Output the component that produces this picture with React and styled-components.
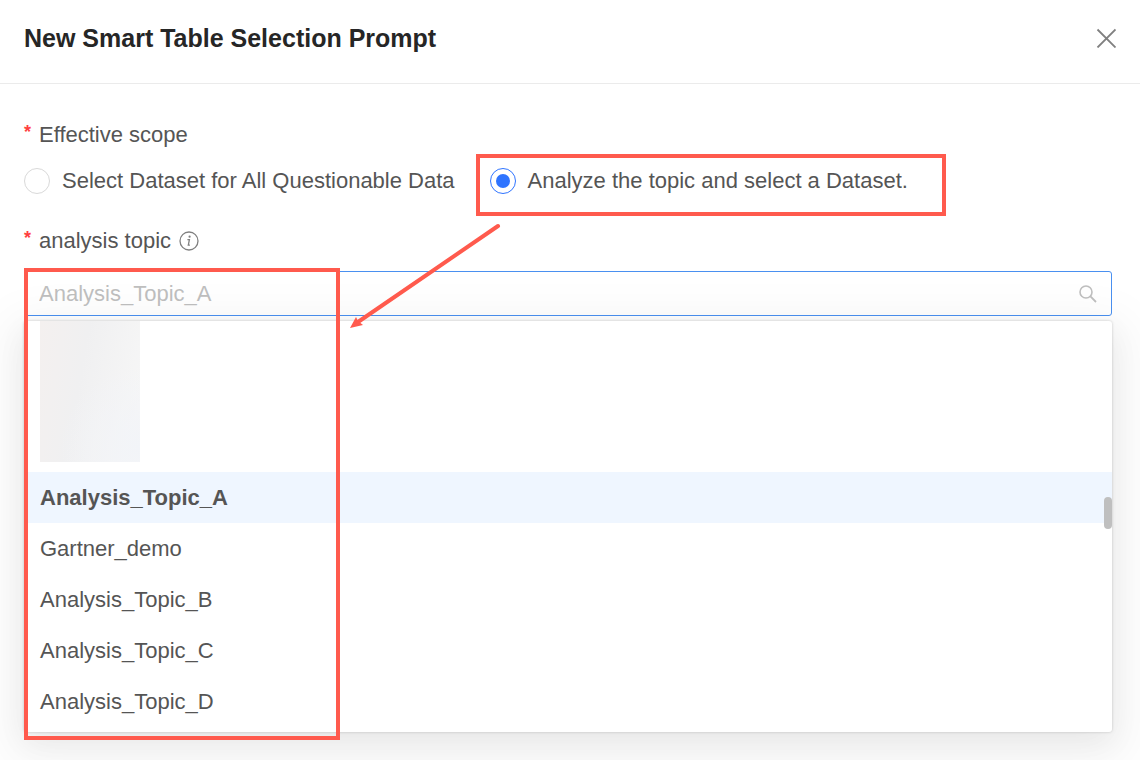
import React from "react";
import styled, { createGlobalStyle } from "styled-components";

const GlobalStyle = createGlobalStyle`
  * {
    box-sizing: border-box;
  }

  body {
    margin: 0;
    background: #ffffff;
    color: #555555;
    font-family: "Liberation Sans", Arial, sans-serif;
    font-size: 22px;
    line-height: 34px;
    overflow: hidden;
  }
`;

const Dialog = styled.section`
  position: relative;
  min-height: 100vh;
`;

const Header = styled.header`
  display: flex;
  align-items: center;
  justify-content: space-between;
  padding: 20px 24px 27px;
  border-bottom: 1px solid #ebebeb;
`;

const Title = styled.h1`
  margin: 0;
  color: #262626;
  font-size: 25px;
  font-weight: 700;
  line-height: 36px;
`;

const CloseButton = styled.button`
  display: flex;
  padding: 0;
  border: none;
  background: none;
  color: #808080;
  cursor: pointer;
`;

const Form = styled.form`
  display: flex;
  flex-direction: column;
  padding: 34px 28px 28px 24px;
`;

const Field = styled.fieldset`
  min-width: 0;
  margin: 0 0 26px;
  padding: 0;
  border: none;
`;

const LabelRow = styled.div`
  display: flex;
  align-items: center;
  gap: 8px;
`;

const Required = styled.span`
  align-self: flex-start;
  width: 7px;
  color: #ff4040;
  font-size: 18px;
  font-weight: 700;
  line-height: 28px;
`;

const RadioGroup = styled.div`
  display: flex;
  align-items: center;
  gap: 35px;
  margin-top: 12px;
`;

const RadioLabel = styled.label`
  position: relative;
  display: flex;
  align-items: center;
  gap: 12px;
  white-space: nowrap;
  cursor: pointer;
`;

const Radio = styled.input`
  appearance: none;
  display: grid;
  place-items: center;
  width: 26px;
  height: 26px;
  margin: 0;
  border: 1px solid #d9d9d9;
  border-radius: 50%;
  background: #ffffff;

  &:checked {
    border-color: #2f74ff;
  }

  &:checked::before {
    content: "";
    width: 14px;
    height: 14px;
    border-radius: 50%;
    background: #2f74ff;
  }
`;

const Picker = styled.div`
  position: relative;
  margin-top: 13px;
`;

const SearchBox = styled.div`
  display: flex;
  align-items: center;
  height: 45px;
  padding: 0 14px;
  border: 1px solid #4a90f0;
  border-radius: 3px;
  color: #bfbfbf;
`;

const SearchInput = styled.input`
  flex: 1;
  min-width: 0;
  padding: 0;
  border: none;
  outline: none;
  background: none;
  color: #555555;
  font: inherit;

  &::placeholder {
    color: #bfbfbf;
    opacity: 1;
  }
`;

const Dropdown = styled.div`
  position: relative;
  margin-top: 5px;
  padding-bottom: 5px;
  border-radius: 3px;
  background: #ffffff;
  box-shadow:
    0 0 3px rgba(0, 0, 0, 0.2),
    0 10px 30px rgba(0, 0, 0, 0.05),
    0 14px 50px 16px rgba(0, 0, 0, 0.05);
`;

const HiddenNames = styled.div`
  width: 100px;
  height: 141px;
  margin: 0 16px 10px;
  background:
    radial-gradient(circle at 100% 90%, #f2f4f8, transparent 50%),
    linear-gradient(100deg, #f4f0ef, #f0f0f1 40%, #f7f7f7);
`;

const Options = styled.ul`
  margin: 0;
  padding: 0;
  list-style: none;
`;

const Option = styled.li`
  padding: 0 16px;
  background: ${(props) => (props.$active ? "#eff6ff" : "transparent")};
  font-weight: ${(props) => (props.$active ? 700 : 400)};
  line-height: 51px;
  cursor: pointer;
`;

const ScrollThumb = styled.div`
  position: absolute;
  top: 176px;
  right: 0;
  width: 8px;
  height: 32px;
  border-radius: 4px;
  background: #bfbfbf;
`;

const Highlight = styled.div`
  position: absolute;
  border: 4px solid #ff5a4d;
  pointer-events: none;
`;

const ScopeHighlight = styled(Highlight)`
  inset: -10px -38px -18px -14px;
`;

const TopicHighlight = styled(Highlight)`
  top: -3px;
  bottom: -8px;
  left: 0;
  width: 316px;
`;

const Arrow = styled.svg`
  position: absolute;
  top: 220px;
  left: 345px;
  pointer-events: none;
`;

const CloseIcon = () => (
  <svg width="20" height="20" viewBox="0 0 20 20" aria-hidden="true">
    <path
      d="M1.5 1.5l18 18M19.5 1.5l-18 18"
      fill="none"
      stroke="currentColor"
      strokeWidth="1.8"
    />
  </svg>
);

const InfoIcon = () => (
  <svg width="20" height="20" viewBox="0 0 20 20" aria-hidden="true">
    <circle cx="10" cy="10" r="9" fill="none" stroke="#808080" strokeWidth="1.3" />
    <circle cx="10.6" cy="5.7" r="1.1" fill="#808080" />
    <path
      d="M8.4 8.7h2l-1.1 5.4h1.6"
      fill="none"
      stroke="#808080"
      strokeWidth="1.3"
    />
  </svg>
);

const SearchIcon = () => (
  <svg width="18" height="18" viewBox="0 0 18 18" aria-hidden="true">
    <circle cx="7" cy="7" r="6" fill="none" stroke="currentColor" strokeWidth="1.6" />
    <path d="M11.2 11.2L17 17" stroke="currentColor" strokeWidth="1.8" />
  </svg>
);

const topics = [
  "Analysis_Topic_A",
  "Gartner_demo",
  "Analysis_Topic_B",
  "Analysis_Topic_C",
  "Analysis_Topic_D",
];

export default function App() {
  const [scope, setScope] = React.useState("topic");
  const [selected, setSelected] = React.useState(topics[0]);

  return (
    <>
      <GlobalStyle />
      <Dialog role="dialog" aria-labelledby="dialog-title">
        <Header>
          <Title id="dialog-title">New Smart Table Selection Prompt</Title>
          <CloseButton type="button" aria-label="Close">
            <CloseIcon />
          </CloseButton>
        </Header>

        <Form onSubmit={(e) => e.preventDefault()}>
          <Field aria-labelledby="scope-label">
            <LabelRow>
              <Required>*</Required>
              <span id="scope-label">Effective scope</span>
            </LabelRow>
            <RadioGroup>
              <RadioLabel>
                <Radio
                  type="radio"
                  name="scope"
                  checked={scope === "all"}
                  onChange={() => setScope("all")}
                />
                Select Dataset for All Questionable Data
              </RadioLabel>
              <RadioLabel>
                <Radio
                  type="radio"
                  name="scope"
                  checked={scope === "topic"}
                  onChange={() => setScope("topic")}
                />
                Analyze the topic and select a Dataset.
                <ScopeHighlight />
              </RadioLabel>
            </RadioGroup>
          </Field>

          <LabelRow>
            <Required>*</Required>
            <label htmlFor="topic">analysis topic</label>
            <InfoIcon />
          </LabelRow>
          <Picker>
            <SearchBox>
              <SearchInput
                id="topic"
                type="text"
                role="combobox"
                aria-expanded="true"
                aria-controls="topic-list"
                placeholder={selected}
              />
              <SearchIcon />
            </SearchBox>
            <Dropdown>
              <HiddenNames />
              <Options id="topic-list" role="listbox">
                {topics.map((topic) => (
                  <Option
                    key={topic}
                    role="option"
                    aria-selected={topic === selected}
                    $active={topic === selected}
                    onClick={() => setSelected(topic)}
                  >
                    {topic}
                  </Option>
                ))}
              </Options>
              <ScrollThumb />
            </Dropdown>
            <TopicHighlight />
          </Picker>
        </Form>

        <Arrow width="160" height="112" viewBox="0 0 160 112" aria-hidden="true">
          <path
            d="M153 6L13 102"
            stroke="#ff5a4d"
            strokeWidth="4"
            strokeLinecap="round"
          />
          <path d="M5 108L11 97L13 101L18 105Z" fill="#ff5a4d" />
        </Arrow>
      </Dialog>
    </>
  );
}
